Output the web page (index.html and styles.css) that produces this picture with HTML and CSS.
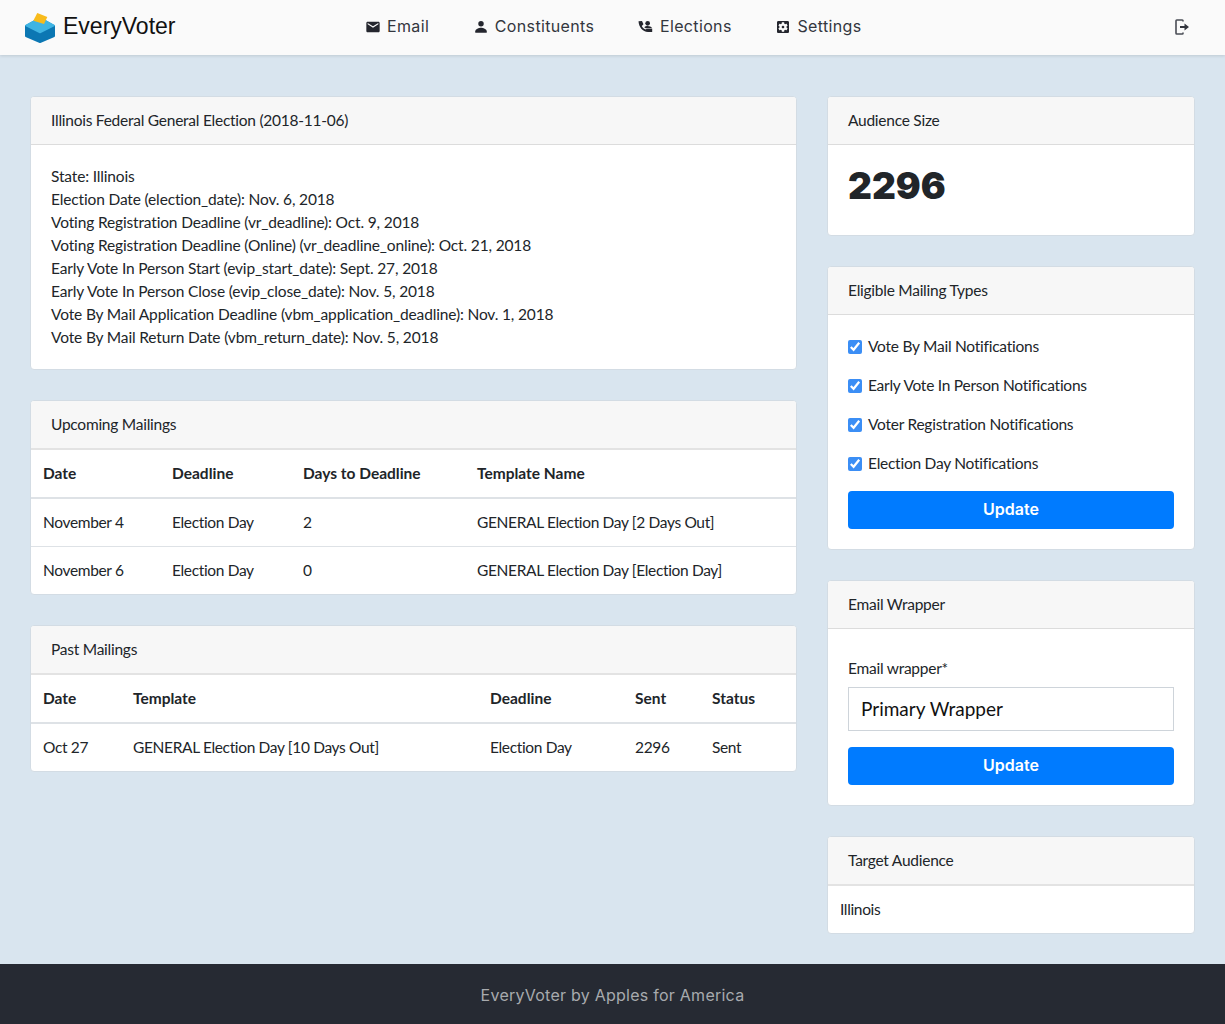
FILE: index.html
```html
<!DOCTYPE html>
<html>

<head>
    <title>EveryVoter</title>
    <link rel="stylesheet" href="styles.css">
</head>

<body>
    <nav class="navbar">
        <a class="brand" href="#">
            <svg class="logo" viewBox="0 0 30 30" width="30" height="30">
                <path d="M1 13 L15 5 L29 13 L29 23 L15 29 L1 23 Z" fill="#0b77b3" stroke="#0b77b3" stroke-width="2" stroke-linejoin="round"/>
                <path d="M1 12.500 L15 5 L29 12.500 L15 19.500 Z" fill="#3fb4e3" stroke="#3fb4e3" stroke-width="1.500" stroke-linejoin="round"/>
                <path d="M12.300 0 L22.300 4 L19 11 L8.300 7.700 Z" fill="#f8bb1c"/>
            </svg>
            <span>EveryVoter</span>
        </a>
        <ul class="nav-links">
            <li><a href="#">
                <svg class="icon" viewBox="0 0 24 24"><path d="M20 4H4C2.900 4 2 4.900 2 6v12c0 1.100.9 2 2 2h16c1.100 0 2-.9 2-2V6c0-1.100-.9-2-2-2zm0 4l-8 5-8-5V6l8 5 8-5v2z"/></svg>
                Email</a></li>
            <li><a href="#">
                <svg class="icon" viewBox="0 0 24 24"><circle cx="12" cy="7.200" r="4.100"/><path d="M3.400 20.500v-2c0-3.500 5.600-5.500 8.600-5.500s8.600 2 8.600 5.500v2z"/></svg>
                Constituents</a></li>
            <li><a href="#">
                <svg class="icon" viewBox="0 0 24 24"><path d="M.8 3.500L6 3l2.200 5-2.600 2.400c1.400 2.600 3.300 4.300 6 5.300l1.400-1.200h8.300v5H15C7 19.500 1 12 .8 3.500z"/><circle cx="14.500" cy="6.500" r="3.500"/><path d="M9.500 12.500c.6-1.500 3-2 5-2 2.500 0 5.500 1 6.800 3.200h-9.800z"/></svg>
                Elections</a></li>
            <li><a href="#">
                <svg class="icon" viewBox="0 0 24 24"><path d="M12 10c-1.100 0-2 .9-2 2s.9 2 2 2 2-.9 2-2-.9-2-2-2zm7-7H5c-1.110 0-2 .9-2 2v14c0 1.100.89 2 2 2h14c1.110 0 2-.9 2-2V5c0-1.100-.89-2-2-2zm-1.750 9c0 .23-.02.46-.05.68l1.480 1.160c.130.110.170.300.080.450l-1.400 2.420c-.090.150-.270.210-.430.150l-1.740-.7c-.360.280-.760.510-1.180.690l-.260 1.850c-.030.170-.180.300-.350.300h-2.800c-.170 0-.320-.130-.350-.290l-.260-1.850c-.430-.180-.820-.410-1.180-.690l-1.740.7c-.160.060-.340 0-.430-.150l-1.400-2.420c-.090-.150-.050-.340.080-.450l1.480-1.160c-.030-.230-.050-.460-.050-.690 0-.230.020-.460.050-.680l-1.480-1.160c-.130-.110-.170-.300-.080-.450l1.400-2.420c.090-.150.270-.210.430-.150l1.740.7c.360-.280.760-.510 1.180-.690l.260-1.850c.030-.170.180-.300.350-.300h2.800c.170 0 .320.130.350.290l.260 1.850c.430.180.820.410 1.180.690l1.740-.7c.160-.060.340 0 .430.150l1.400 2.420c.090.150.050.340-.080.450l-1.480 1.160c.030.230.050.460.050.690z"/></svg>
                Settings</a></li>
        </ul>
        <a class="logout" href="#">
            <svg viewBox="0 0 16 16" width="16" height="16"><path d="M9 2.500V1.800C9 1.300 8.700 1 8.200 1H2.800C2.300 1 2 1.300 2 1.800v12.400c0 .5.3.8.8.8h5.400c.5 0 .8-.3.8-.8v-.7" fill="none" stroke="#4a4d55" stroke-width="1.600"/><path d="M6 7h4.500V4.500L15 8l-4.500 3.500V9H6z" fill="#33363e"/></svg>
        </a>
    </nav>

    <main class="page">
        <div class="col-main">
            <section class="card">
                <div class="card-header">Illinois Federal General Election (2018-11-06)</div>
                <div class="card-body details">
                    State: Illinois<br>
                    Election Date (election_date): Nov. 6, 2018<br>
                    Voting Registration Deadline (vr_deadline): Oct. 9, 2018<br>
                    Voting Registration Deadline (Online) (vr_deadline_online): Oct. 21, 2018<br>
                    Early Vote In Person Start (evip_start_date): Sept. 27, 2018<br>
                    Early Vote In Person Close (evip_close_date): Nov. 5, 2018<br>
                    Vote By Mail Application Deadline (vbm_application_deadline): Nov. 1, 2018<br>
                    Vote By Mail Return Date (vbm_return_date): Nov. 5, 2018
                </div>
            </section>

            <section class="card">
                <div class="card-header flush">Upcoming Mailings</div>
                <table class="table upcoming">
                    <thead>
                        <tr><th>Date</th><th>Deadline</th><th>Days to Deadline</th><th>Template Name</th></tr>
                    </thead>
                    <tbody>
                        <tr><td>November 4</td><td>Election Day</td><td>2</td><td>GENERAL Election Day [2 Days Out]</td></tr>
                        <tr><td>November 6</td><td>Election Day</td><td>0</td><td>GENERAL Election Day [Election Day]</td></tr>
                    </tbody>
                </table>
            </section>

            <section class="card">
                <div class="card-header flush">Past Mailings</div>
                <table class="table past">
                    <thead>
                        <tr><th>Date</th><th>Template</th><th>Deadline</th><th>Sent</th><th>Status</th></tr>
                    </thead>
                    <tbody>
                        <tr><td>Oct 27</td><td>GENERAL Election Day [10 Days Out]</td><td>Election Day</td><td>2296</td><td>Sent</td></tr>
                    </tbody>
                </table>
            </section>
        </div>

        <div class="col-side">
            <section class="card">
                <div class="card-header">Audience Size</div>
                <div class="card-body"><h1 class="count">2296</h1></div>
            </section>

            <section class="card">
                <div class="card-header">Eligible Mailing Types</div>
                <div class="card-body">
                    <label class="check"><input type="checkbox" checked> Vote By Mail Notifications</label>
                    <label class="check"><input type="checkbox" checked> Early Vote In Person Notifications</label>
                    <label class="check"><input type="checkbox" checked> Voter Registration Notifications</label>
                    <label class="check"><input type="checkbox" checked> Election Day Notifications</label>
                    <button class="btn" type="button">Update</button>
                </div>
            </section>

            <section class="card">
                <div class="card-header">Email Wrapper</div>
                <div class="card-body">
                    <label class="field-label">Email wrapper*</label>
                    <div class="select">Primary Wrapper</div>
                    <button class="btn" type="button">Update</button>
                </div>
            </section>

            <section class="card">
                <div class="card-header flush">Target Audience</div>
                <table class="table">
                    <tbody>
                        <tr><td>Illinois</td></tr>
                    </tbody>
                </table>
            </section>
        </div>
    </main>

    <footer class="footer">EveryVoter by Apples for America</footer>
</body>

</html>
```

FILE: styles.css
```css
/* Page */
body {
  margin: 0;
  font-family: Lato, "Noto Sans", sans-serif;
  font-size: 15.5px;
  line-height: 23px;
  letter-spacing: -0.25px;
  color: #212529;
  background-color: #d9e5ef;
}

a {
  color: inherit;
  text-decoration: none;
}

/* Navbar */
.navbar {
  display: flex;
  align-items: center;
  height: 53px;
  padding: 0 35px 2px 25px;
  background-color: #fafafa;
  box-shadow: 0 1px 3px rgba(0, 0, 0, 0.12);
}

.brand {
  display: flex;
  align-items: center;
  gap: 8px;
  width: 340px;
  font-family: "Liberation Sans", Arial, sans-serif;
  font-size: 23px;
  letter-spacing: 0;
  color: #111;
}

.logo {
  margin-top: 2px;
}

.nav-links {
  display: flex;
  gap: 43.7px;
  margin: 0;
  padding: 0;
  list-style: none;
  font-family: Inter, sans-serif;
  font-size: 16px;
  letter-spacing: 0.35px;
  color: #33363e;
}

.nav-links a {
  display: flex;
  align-items: center;
  gap: 6px;
}

.icon {
  width: 16px;
  height: 16px;
  fill: #24262e;
}

.logout {
  display: flex;
  margin-left: auto;
}

/* Layout */
.page {
  display: flex;
  gap: 30px;
  padding: 41px 30px 0;
}

.col-main {
  width: 767px;
}

.col-side {
  width: 368px;
}

/* Cards */
.card {
  margin-bottom: 30px;
  background-color: #fff;
  border: 1px solid #d3dce4;
  border-radius: 4px;
  overflow: hidden;
}

.card-header {
  height: 47px;
  padding: 0 20px;
  line-height: 47px;
  background-color: #f7f7f7;
  border-bottom: 1px solid #dcdcdc;
}

.card-header.flush {
  border-bottom-width: 2px;
  border-bottom-color: #e3e3e3;
}

.card-body {
  padding: 20px;
}

.details {
  letter-spacing: -0.15px;
}

.count {
  margin: 0 0 8px;
  font-family: Inter, sans-serif;
  font-size: 37px;
  font-weight: 900;
  line-height: 42px;
  letter-spacing: 0;
}

/* Tables */
.table {
  width: 100%;
  border-collapse: collapse;
}

.table th,
.table td {
  height: 47px;
  padding: 0 12px;
  text-align: left;
}

.table th {
  font-weight: 700;
  letter-spacing: 0;
  border-bottom: 2px solid #dee2e6;
}

.table td {
  letter-spacing: -0.35px;
  border-top: 1px solid #dee2e6;
}

.table tbody tr:first-child td {
  border-top: 0;
}

.upcoming th:nth-child(1) { width: 105px; }
.upcoming th:nth-child(2) { width: 107px; }
.upcoming th:nth-child(3) { width: 150px; }

.past th:nth-child(1) { width: 66px; }
.past th:nth-child(2) { width: 333px; }
.past th:nth-child(3) { width: 121px; }
.past th:nth-child(4) { width: 53px; }

/* Forms */
.check {
  display: flex;
  align-items: flex-start;
  gap: 6px;
  height: 23px;
  margin-bottom: 16px;
}

.check input {
  width: 14px;
  height: 14px;
  margin: 5px 0 0;
  accent-color: #3b8ef5;
}

.field-label {
  display: block;
  height: 23px;
  margin: 8px 0 7px;
}

.select {
  height: 42px;
  margin-bottom: 16px;
  padding: 0 12px;
  font-size: 19px;
  line-height: 42px;
  letter-spacing: 0;
  color: #111;
  border: 1px solid #ced4da;
}

.btn {
  display: block;
  width: 100%;
  height: 38px;
  padding: 0 0 2px;
  font-family: Inter, sans-serif;
  font-size: 16px;
  font-weight: 600;
  color: #fff;
  background-color: #007bff;
  border: 0;
  border-radius: 4px;
}

/* Footer */
.footer {
  height: 60px;
  line-height: 62px;
  text-align: center;
  font-family: Inter, sans-serif;
  font-size: 16px;
  letter-spacing: 0.25px;
  color: #a8aaae;
  background-color: #262a33;
}
```
